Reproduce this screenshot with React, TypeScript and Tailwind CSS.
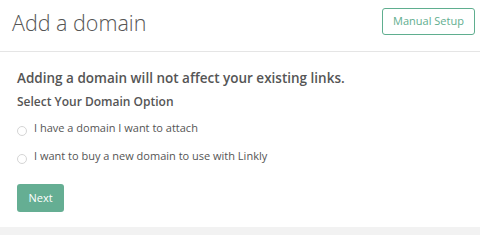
export default function App() {
  return (
    <div className="w-[480px] h-[235px] bg-white flex flex-col text-[#555] font-['Open_Sans',sans-serif]">
      <div className="h-[52px] shrink-0 flex items-start justify-between border-b border-[#e5e5e5] pl-3 pr-[5px]">
        <h1 className="text-[21.5px] leading-none font-light mt-[12px] text-[#555]">Add a domain</h1>
        <button className="mt-2 h-[27px] w-[93px] rounded-[3px] border border-[#5fae8f] text-[11px] text-[#5fae8f] bg-white">
          Manual Setup
        </button>
      </div>
      <div className="flex-1 pl-[17px] pt-[16px]">
        <p className="text-[13.5px] font-semibold leading-5">Adding a domain will not affect your existing links.</p>
        <p className="text-[12px] font-semibold mt-[6px] leading-4">Select Your Domain Option</p>
        <div className="mt-[10px] flex flex-col gap-[12px]">
          <label className="flex items-start gap-[7px] text-[11px] leading-4">
            <span className="mt-[6px] w-[10px] h-[10px] rounded-full border border-[#d5d5d5] bg-white shrink-0" />
            <span>I have a domain I want to attach</span>
          </label>
          <label className="flex items-start gap-[7px] text-[11px] leading-4">
            <span className="mt-[6px] w-[10px] h-[10px] rounded-full border border-[#d5d5d5] bg-white shrink-0" />
            <span>I want to buy a new domain to use with Linkly</span>
          </label>
        </div>
        <button className="mt-[20px] w-[47px] h-[28px] rounded-[3px] bg-[#65ae93] text-white text-[11px]">Next</button>
      </div>
      <div className="h-[8px] shrink-0 bg-[#f2f2f2]" />
    </div>
  )
}
